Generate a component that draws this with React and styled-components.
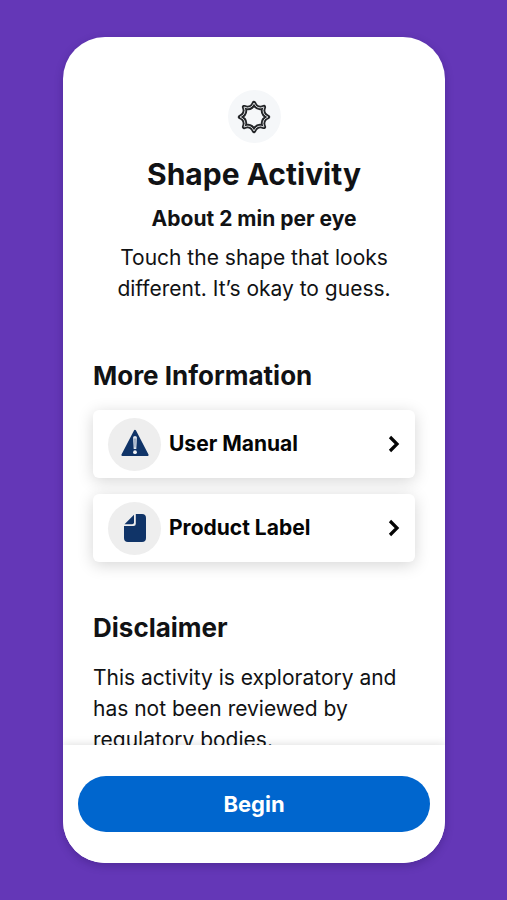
import React from "react";
import styled, { createGlobalStyle } from "styled-components";

const GlobalStyle = createGlobalStyle`
  *, *::before, *::after { box-sizing: border-box; }
  body {
    margin: 0;
    background: #6437b7;
    color: #111214;
    font-family: Inter, "Liberation Sans", sans-serif;
  }
`;

const Page = styled.div`
  display: flex;
  height: 100vh;
  padding: 37px 62px 37px 63px;
`;

const Card = styled.main`
  flex: 1;
  min-width: 0;
  display: flex;
  flex-direction: column;
  overflow: hidden;
  background: #fff;
  border-radius: 42px;
  box-shadow: 0 3px 8px rgba(30, 10, 80, 0.28);
`;

const Content = styled.div`
  flex: 1;
  min-height: 0;
  overflow: hidden;
  padding: 53px 30px 0;
`;

const Intro = styled.header`
  display: flex;
  flex-direction: column;
  align-items: center;
  text-align: center;
`;

const IconDisc = styled.span`
  flex: none;
  display: grid;
  place-items: center;
  width: 53px;
  height: 53px;
  border-radius: 50%;
  background: ${(p) => p.$tone};
`;

const Title = styled.h1`
  margin: 13px 0 0;
  font-size: 30px;
  line-height: 36px;
  font-weight: 700;
`;

const Duration = styled.p`
  margin: 12px 0 0;
  font-size: 21px;
  line-height: 30px;
  font-weight: 650;
`;

const Body = styled.p`
  margin: ${(p) => p.$gap} 0 0;
  font-size: 21px;
  line-height: 31px;
  font-weight: 400;
`;

const Section = styled.section`
  margin-top: ${(p) => p.$gap};
`;

const Heading = styled.h2`
  margin: 0;
  font-size: 26px;
  line-height: 32px;
  font-weight: 700;
`;

const LinkList = styled.nav`
  display: flex;
  flex-direction: column;
  gap: 16px;
  margin-top: 18px;
`;

const LinkRow = styled.a`
  display: flex;
  align-items: center;
  gap: 8px;
  height: 68px;
  padding: 0 15px;
  border-radius: 6px;
  background: #fff;
  box-shadow: 0 3px 16px rgba(0, 0, 0, 0.17);
  color: #050505;
  text-decoration: none;
`;

const LinkLabel = styled.span`
  flex: 1;
  font-size: 21px;
  line-height: 30px;
  font-weight: 650;
`;

const Footer = styled.footer`
  flex: none;
  padding: 31px 15px;
  background: #fff;
  box-shadow: 0 -1px 8px rgba(0, 0, 0, 0.12);
`;

const BeginButton = styled.button`
  display: block;
  width: 100%;
  height: 56px;
  border: 0;
  border-radius: 28px;
  background: #0066ce;
  color: #fff;
  font-family: inherit;
  font-size: 22px;
  line-height: 28px;
  font-weight: 700;
  cursor: pointer;
`;

const starPath = (() => {
  const points = Array.from({ length: 16 }, (_, i) => {
    const radius = i % 2 === 0 ? 14 : 7.6;
    const angle = (i * Math.PI) / 8 - Math.PI / 2;
    const x = 17 + radius * Math.cos(angle);
    const y = 17 + radius * Math.sin(angle);
    return `${x.toFixed(2)} ${y.toFixed(2)}`;
  });
  const arcs = points
    .filter((_, i) => i % 2 === 1)
    .map((valley, i) => `Q${valley} ${points[(i * 2 + 2) % 16]}`);
  return `M${points[0]}${arcs.join("")}Z`;
})();

function StarIcon() {
  return (
    <svg width="34" height="34" viewBox="0 0 34 34" fill="none" strokeLinejoin="round" aria-hidden="true">
      <path d={starPath} stroke="#242629" strokeWidth="4.4" />
      <path d={starPath} stroke="#d5d7d9" strokeWidth="1" />
    </svg>
  );
}

function WarningIcon() {
  return (
    <svg width="30" height="30" viewBox="0 0 30 30" aria-hidden="true">
      <path d="M15 1.8 27.6 26H2.4Z" fill="#103468" stroke="#103468" strokeWidth="2" strokeLinejoin="round" />
      <path d="M13.1 8.6q0-1.7 1.9-1.7t1.9 1.7l-.6 11.4h-2.6Z" fill="#e1e7ef" />
      <path d="M14.5 9.4h1l-.2 9h-.6Z" fill="#5e789c" />
      <circle cx="15" cy="23.2" r="1.9" fill="#f1f3f6" />
    </svg>
  );
}

function DocumentIcon() {
  return (
    <svg width="26" height="30" viewBox="0 0 26 30" aria-hidden="true">
      <path d="M13.8 1H20q4 0 4 4v20q0 4-4 4H6q-4 0-4-4V13h9.5q2.3 0 2.3-2.3Z" fill="#103468" />
      <path d="M2.5 11.2 12 1.8v7.6q0 1.8-1.8 1.8Z" fill="#103468" />
    </svg>
  );
}

function Chevron() {
  return (
    <svg width="12" height="18" viewBox="0 0 12 18" fill="none" aria-hidden="true">
      <path d="M2 2l7 7-7 7" stroke="#050505" strokeWidth="3.2" />
    </svg>
  );
}

const links = [
  { label: "User Manual", href: "#user-manual", Icon: WarningIcon },
  { label: "Product Label", href: "#product-label", Icon: DocumentIcon },
];

export default function App() {
  return (
    <>
      <GlobalStyle />
      <Page>
        <Card>
          <Content>
            <Intro>
              <IconDisc $tone="#f5f7f9">
                <StarIcon />
              </IconDisc>
              <Title>Shape Activity</Title>
              <Duration>About 2 min per eye</Duration>
              <Body $gap="8px">Touch the shape that looks different. It’s okay to guess.</Body>
            </Intro>
            <Section $gap="56px">
              <Heading>More Information</Heading>
              <LinkList aria-label="More information">
                {links.map(({ label, href, Icon }) => (
                  <LinkRow key={label} href={href}>
                    <IconDisc $tone="#eeeeee">
                      <Icon />
                    </IconDisc>
                    <LinkLabel>{label}</LinkLabel>
                    <Chevron />
                  </LinkRow>
                ))}
              </LinkList>
            </Section>
            <Section $gap="50px">
              <Heading>Disclaimer</Heading>
              <Body $gap="18px">
                This activity is exploratory and has not been reviewed by regulatory bodies.
              </Body>
            </Section>
          </Content>
          <Footer>
            <BeginButton type="button">Begin</BeginButton>
          </Footer>
        </Card>
      </Page>
    </>
  );
}
